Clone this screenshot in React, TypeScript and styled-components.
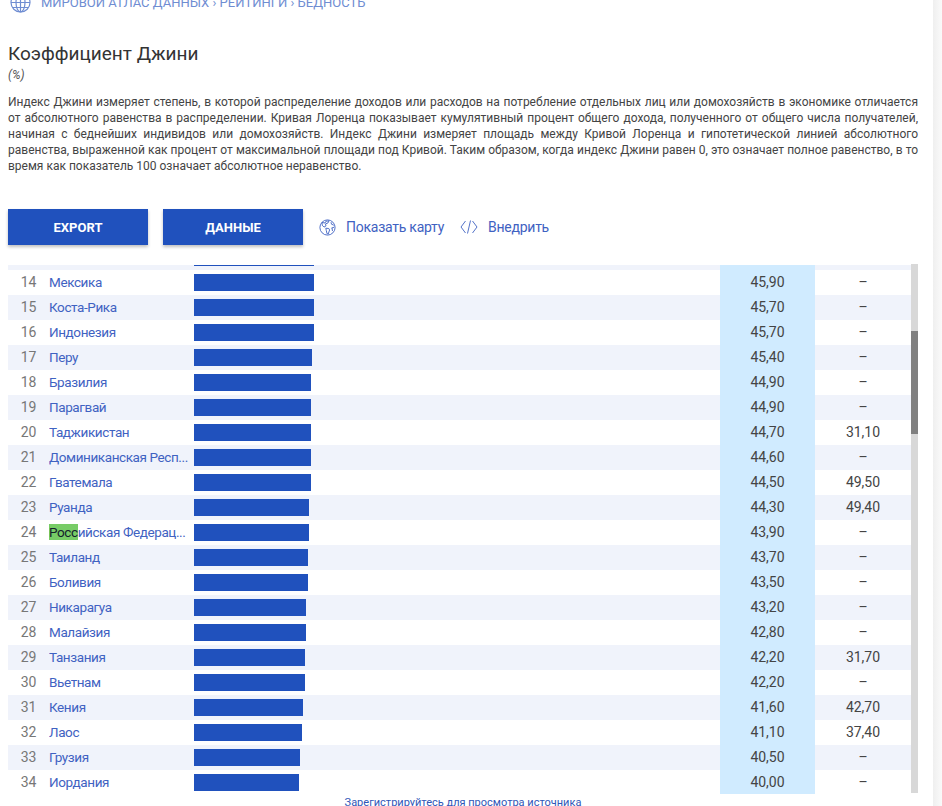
import React from "react";
import styled, { createGlobalStyle } from "styled-components";

const Global = createGlobalStyle`
  html, body { margin: 0; padding: 0; background: #fff; }
  body { font-family: "Roboto", "Noto Sans", sans-serif; color: #444; }
`;

const Page = styled.div`
  box-sizing: border-box;
  width: 942px;
  height: 806px;
  overflow: hidden;
  display: flex;
  flex-direction: column;
  background: linear-gradient(90deg, #fff 933px, #efefef 933px, #fafafa 942px);
`;

const Crumbs = styled.div`
  flex: none;
  display: flex;
  align-items: center;
  gap: 10px;
  height: 22px;
  margin-top: -9px;
  padding-left: 10px;
  color: #6f8dd2;
  font-size: 13px;
  white-space: nowrap;
`;

const Content = styled.div`
  flex: none;
  padding: 0 24px 0 8px;
`;

const Title = styled.h1`
  margin: 29px 0 0;
  font-size: 19px;
  line-height: 24px;
  font-weight: 400;
  color: #333;
`;

const Unit = styled.div`
  margin-top: 1px;
  font-size: 12px;
  line-height: 16px;
  font-style: italic;
  color: #555;
`;

const Description = styled.p`
  margin: 11px 0 0;
  font-size: 12px;
  line-height: 16px;
  text-align: justify;
  color: #444;
`;

const Toolbar = styled.div`
  display: flex;
  align-items: center;
  margin-top: 35px;
  height: 36px;
`;

const Button = styled.button`
  width: 140px;
  height: 36px;
  margin-right: 15px;
  border: 0;
  padding: 0;
  background: #2051bd;
  color: #fff;
  font-family: inherit;
  font-size: 13px;
  font-weight: 700;
  box-shadow: 0 2px 3px rgba(0, 0, 0, 0.25);
`;

const ToolLink = styled.a`
  display: flex;
  align-items: center;
  gap: 10px;
  margin-left: 1px;
  margin-right: 15px;
  color: #3f62c2;
  font-size: 14px;
  letter-spacing: -0.25px;
  white-space: nowrap;
`;

const TableFrame = styled.div`
  flex: none;
  position: relative;
  margin-top: 20px;
  margin-left: 8px;
  width: 910px;
  height: 529px;
`;

const Clip = styled.div`
  height: 529px;
  overflow: hidden;
`;

const Rows = styled.div`
  width: 903px;
  margin-top: -20px;
`;

const Row = styled.div<{ $alt: boolean }>`
  display: grid;
  grid-template-columns: 41px 145px 526px 95px 96px;
  height: 25px;
  align-items: center;
  background: ${(p) => (p.$alt ? "#f0f3fb" : "#fff")};
  font-size: 14px;
`;

const Rank = styled.div`
  align-self: start;
  line-height: 24px;
  text-align: center;
  color: #777;
`;

const Name = styled.a`
  align-self: start;
  line-height: 24px;
  color: #3f62c2;
  font-size: 13.5px;
  letter-spacing: -0.4px;
  white-space: nowrap;
  overflow: hidden;
  text-overflow: ellipsis;
`;

const Hit = styled.span`
  background: #77cc66;
  color: #14212c;
`;

const BarCell = styled.div`
  height: 17px;
`;

const Bar = styled.div`
  height: 17px;
  background: #2051bd;
`;

const Value = styled.div`
  height: 25px;
  line-height: 25px;
  text-align: center;
  background: #d0ebff;
  color: #444;
`;

const Extra = styled.div`
  align-self: start;
  line-height: 24px;
  text-align: center;
  color: #444;
`;

const Track = styled.div`
  position: absolute;
  top: -1px;
  right: 0;
  bottom: 1px;
  width: 7px;
  background: #d8d8d8;
`;

const Thumb = styled.div`
  margin-top: 67px;
  height: 103px;
  background: #808080;
`;

const SourceNote = styled.a`
  flex: none;
  display: block;
  margin-top: 2px;
  text-align: center;
  font-size: 11px;
  line-height: 14px;
  padding-right: 16px;
  color: #2f56b8;
  white-space: nowrap;
`;

const GlobeGrid = () => (
  <svg width="21" height="21" viewBox="0 0 21 21" fill="none" stroke="#6f8dd2" strokeWidth="1.2">
    <circle cx="10.5" cy="10.5" r="9.5" />
    <ellipse cx="10.5" cy="10.5" rx="4.5" ry="9.5" />
    <path d="M10.5 1v19M1 10.5h19M2.5 5.5h16M2.5 15.5h16" />
  </svg>
);

const WorldIcon = () => (
  <svg width="17" height="17" viewBox="0 0 17 17" fill="none" stroke="#3f62c2" strokeWidth="0.9">
    <circle cx="8.5" cy="8.5" r="7.6" />
    <path d="M3 3.5l3 .5 1-1.8 3-.3-1 2-2.5 1 .5 2-2 1.2L3.2 6.2z" />
    <path d="M6.8 9.2l3 .3.8 1.5-1.4 4-1.2-.3-.7-3.2z" />
    <path d="M12 3.2l.5 2 2.4 1M12.5 9l2.8-.8M13 9l.5 3" />
  </svg>
);

const CodeIcon = () => (
  <svg width="18" height="16" viewBox="0 0 18 16" fill="none" stroke="#3f62c2" strokeWidth="0.9">
    <path d="M5.5 2L1 8l4.5 6M12.5 2L17 8l-4.5 6M10.5 1.5L7.5 14.5" />
  </svg>
);

type R = [number, string, number, string, string];
const data: R[] = [
  [13, "", 120, "", ""],
  [14, "Мексика", 120, "45,90", "–"],
  [15, "Коста-Рика", 120, "45,70", "–"],
  [16, "Индонезия", 120, "45,70", "–"],
  [17, "Перу", 118, "45,40", "–"],
  [18, "Бразилия", 117, "44,90", "–"],
  [19, "Парагвай", 117, "44,90", "–"],
  [20, "Таджикистан", 117, "44,70", "31,10"],
  [21, "Доминиканская Респ...", 117, "44,60", "–"],
  [22, "Гватемала", 117, "44,50", "49,50"],
  [23, "Руанда", 115, "44,30", "49,40"],
  [24, "Российская Федерац...", 115, "43,90", "–"],
  [25, "Таиланд", 114, "43,70", "–"],
  [26, "Боливия", 114, "43,50", "–"],
  [27, "Никарагуа", 112, "43,20", "–"],
  [28, "Малайзия", 112, "42,80", "–"],
  [29, "Танзания", 111, "42,20", "31,70"],
  [30, "Вьетнам", 111, "42,20", "–"],
  [31, "Кения", 109, "41,60", "42,70"],
  [32, "Лаос", 108, "41,10", "37,40"],
  [33, "Грузия", 106, "40,50", "–"],
  [34, "Иордания", 105, "40,00", "–"],
];

const renderName = (n: string) =>
  n.startsWith("Росс") ? (
    <>
      <Hit>Росс</Hit>
      {n.slice(4)}
    </>
  ) : (
    n
  );

export default function App() {
  return (
    <Page>
      <Global />
      <Crumbs>
        <GlobeGrid />
        <span>МИРОВОЙ АТЛАС ДАННЫХ › РЕЙТИНГИ › БЕДНОСТЬ</span>
      </Crumbs>
      <Content>
        <Title>Коэффициент Джини</Title>
        <Unit>(%)</Unit>
        <Description>
          Индекс Джини измеряет степень, в которой распределение доходов или расходов на потребление отдельных лиц или домохозяйств в экономике отличается от абсолютного равенства в распределении. Кривая Лоренца показывает кумулятивный процент общего дохода, полученного от общего числа получателей, начиная с беднейших индивидов или домохозяйств. Индекс Джини измеряет площадь между Кривой Лоренца и гипотетической линией абсолютного равенства, выраженной как процент от максимальной площади под Кривой. Таким образом, когда индекс Джини равен 0, это означает полное равенство, в то время как показатель 100 означает абсолютное неравенство.
        </Description>
        <Toolbar>
          <Button>EXPORT</Button>
          <Button>ДАННЫЕ</Button>
          <ToolLink>
            <WorldIcon />
            Показать карту
          </ToolLink>
          <ToolLink>
            <CodeIcon />
            Внедрить
          </ToolLink>
        </Toolbar>
      </Content>
      <TableFrame>
        <Clip>
          <Rows>
            {data.map((r) => (
              <Row key={r[0]} $alt={r[0] % 2 === 1}>
                <Rank>{r[1] ? r[0] : ""}</Rank>
                <Name>{renderName(r[1])}</Name>
                <BarCell>
                  <Bar style={{ width: r[2] }} />
                </BarCell>
                <Value>{r[3]}</Value>
                <Extra>{r[4]}</Extra>
              </Row>
            ))}
          </Rows>
        </Clip>
        <Track>
          <Thumb />
        </Track>
      </TableFrame>
      <SourceNote>Зарегистрируйтесь для просмотра источника</SourceNote>
    </Page>
  );
}
